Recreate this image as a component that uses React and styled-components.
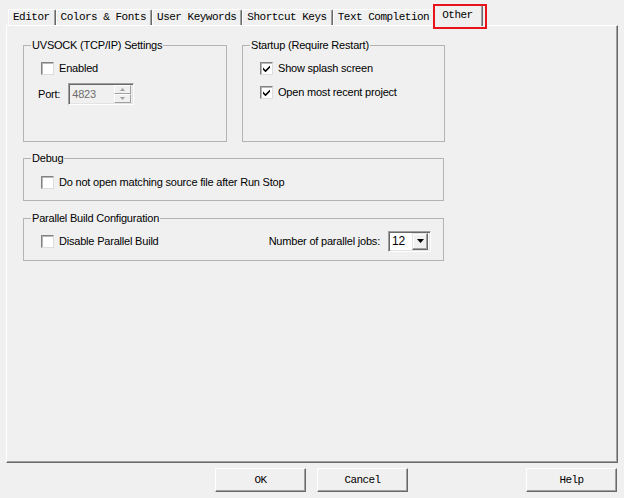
import React from "react";
import styled, { createGlobalStyle } from "styled-components";

const GlobalStyle = createGlobalStyle`
  html, body {
    margin: 0;
    padding: 0;
    background: #f0f0f0;
    width: 624px;
    height: 498px;
    overflow: hidden;
  }
  * {
    box-sizing: border-box;
  }
`;

const tabs = [
  "Editor",
  "Colors & Fonts",
  "User Keywords",
  "Shortcut Keys",
  "Text Completion",
  "Other",
];

const CheckMark = () => (
  <svg width="9" height="9" viewBox="0 0 9 9">
    <path d="M1 3.5 L3.5 6 L8 1.5 L8 3.8 L3.5 8.2 L1 5.7 Z" fill="#000" />
  </svg>
);

const Check = ({ checked, label }) => (
  <CheckRow>
    <Box>{checked && <CheckMark />}</Box>
    <Label>{label}</Label>
  </CheckRow>
);

const App = () => {
  return (
    <Window>
      <GlobalStyle />
      <TabStrip>
        {tabs.map((t) => (
          <Tab key={t} $active={t === "Other"}>
            {t}
            {t === "Other" && <Highlight />}
          </Tab>
        ))}
      </TabStrip>
      <Panel>
        <TopRow>
          <Group $height={104}>
            <Legend>UVSOCK (TCP/IP) Settings</Legend>
            <GroupBody $top={6} $gap={5}>
              <Check label="Enabled" />
              <PortRow>
                <Label>Port:</Label>
                <SpinBox>
                  <SpinText>4823</SpinText>
                  <SpinButtons>
                    <SpinBtn>
                      <svg width="5" height="3" viewBox="0 0 5 3">
                        <path d="M2.5 0 L5 3 L0 3 Z" fill="#a0a0a0" />
                      </svg>
                    </SpinBtn>
                    <SpinBtn>
                      <svg width="5" height="3" viewBox="0 0 5 3">
                        <path d="M0 0 L5 0 L2.5 3 Z" fill="#a0a0a0" />
                      </svg>
                    </SpinBtn>
                  </SpinButtons>
                </SpinBox>
              </PortRow>
            </GroupBody>
          </Group>
          <Group $height={104}>
            <Legend>Startup (Require Restart)</Legend>
            <GroupBody $top={6} $gap={4}>
              <Check checked label="Show splash screen" />
              <Check checked label="Open most recent project" />
            </GroupBody>
          </Group>
        </TopRow>
        <Group $height={50} $width={421} $mt={9}>
          <Legend>Debug</Legend>
          <GroupBody $top={7}>
            <Check label="Do not open matching source file after Run Stop" />
          </GroupBody>
        </Group>
        <Group $height={50} $width={421} $mt={10}>
          <Legend>Parallel Build Configuration</Legend>
          <GroupBody $top={5}>
            <SplitRow>
              <Check label="Disable Parallel Build" />
              <JobsRow>
                <Label>Number of parallel jobs:</Label>
                <Combo>
                  <ComboText>12</ComboText>
                  <ComboBtn>
                    <svg width="7" height="4" viewBox="0 0 7 4">
                      <path d="M0 0 L7 0 L3.5 4 Z" fill="#000" />
                    </svg>
                  </ComboBtn>
                </Combo>
              </JobsRow>
            </SplitRow>
          </GroupBody>
        </Group>
      </Panel>
      <Footer>
        <Button>OK</Button>
        <Button>Cancel</Button>
        <Button $push>Help</Button>
      </Footer>
    </Window>
  );
};

export default App;

const Window = styled.div`
  width: 624px;
  height: 498px;
  display: flex;
  flex-direction: column;
  font-family: "Liberation Sans", Arial, sans-serif;
  font-size: 11px;
  letter-spacing: -0.2px;
  color: #000;
`;

const TabStrip = styled.div`
  display: flex;
  align-items: flex-end;
  height: 25px;
  padding-left: 8px;
`;

const Tab = styled.div`
  position: relative;
  height: ${(p) => (p.$active ? "21px" : "16px")};
  margin: ${(p) => (p.$active ? "0 0 -1px -1px" : "0")};
  padding: ${(p) => (p.$active ? "3px 9px 0 7px" : "1px 5px 0 4px")};
  z-index: ${(p) => (p.$active ? 2 : 0)};
  background: #f0f0f0;
  border-top: 1px solid #fff;
  border-left: 1px solid #fff;
  border-right: 1px solid #696969;
  box-shadow: inset -1px 0 0 #a0a0a0;
  border-radius: 2px 2px 0 0;
  font-family: "Liberation Mono", "Courier New", monospace;
  font-size: 11px;
  letter-spacing: -0.5px;
  line-height: 13px;
  white-space: nowrap;
`;

const Highlight = styled.span`
  position: absolute;
  left: -2px;
  right: -5px;
  top: -2px;
  bottom: -3px;
  border: 2px solid #e8141c;
`;

const Panel = styled.div`
  margin-left: 6px;
  width: 612px;
  height: 438px;
  border-top: 1px solid #fff;
  border-left: 1px solid #fff;
  border-right: 1px solid #696969;
  border-bottom: 1px solid #696969;
  box-shadow: inset -1px -1px 0 #a0a0a0;
  padding: 12px 0 0 16px;
  display: flex;
  flex-direction: column;
  align-items: flex-start;
`;

const TopRow = styled.div`
  display: grid;
  grid-template-columns: 204px 203px;
  column-gap: 15px;
`;

const Group = styled.fieldset`
  margin: ${(p) => p.$mt || 0}px 0 0 0;
  padding: 0;
  height: ${(p) => p.$height}px;
  width: ${(p) => (p.$width ? `${p.$width}px` : "auto")};
  border: 1px solid #b4b4b4;
  min-width: 0;
`;

const Legend = styled.legend`
  margin-left: 7px;
  padding: 0 1px;
  line-height: 14px;
  font-size: 11px;
`;

const GroupBody = styled.div`
  display: flex;
  flex-direction: column;
  gap: ${(p) => p.$gap || 0}px;
  padding: ${(p) => p.$top}px 12px 0 17px;
`;

const CheckRow = styled.div`
  display: flex;
  align-items: center;
  height: 20px;
  gap: 5px;
`;

const Box = styled.span`
  width: 13px;
  height: 13px;
  background: #fff;
  border: 1px solid;
  border-color: #828282 #dcdcdc #dcdcdc #828282;
  box-shadow: inset 1px 1px 0 #b8b8b8;
  display: flex;
  align-items: center;
  justify-content: center;
`;

const Label = styled.span`
  white-space: nowrap;
`;

const PortRow = styled.div`
  display: flex;
  align-items: center;
  gap: 8px;
  margin-left: -3px;
  height: 22px;
`;

const SpinBox = styled.div`
  width: 66px;
  height: 22px;
  display: flex;
  align-items: center;
  justify-content: space-between;
  border: 1px solid;
  border-color: #a0a0a0 #fff #fff #a0a0a0;
  box-shadow: inset 1px 1px 0 #696969, inset -1px -1px 0 #e3e3e3;
  padding: 2px 2px 2px 3px;
`;

const SpinText = styled.span`
  color: #6d6d6d;
`;

const SpinButtons = styled.div`
  display: flex;
  flex-direction: column;
  width: 17px;
  height: 18px;
`;

const SpinBtn = styled.div`
  flex: 1;
  display: flex;
  align-items: center;
  justify-content: center;
  border: 1px solid;
  border-color: #fff #a0a0a0 #a0a0a0 #fff;
`;

const SplitRow = styled.div`
  display: flex;
  align-items: center;
  justify-content: space-between;
  height: 22px;
`;

const JobsRow = styled.div`
  display: flex;
  align-items: center;
  gap: 8px;
`;

const Combo = styled.div`
  width: 43px;
  height: 21px;
  display: flex;
  align-items: center;
  justify-content: space-between;
  background: #fff;
  border: 1px solid;
  border-color: #a0a0a0 #fff #fff #a0a0a0;
  box-shadow: inset 1px 1px 0 #696969, inset -1px -1px 0 #e3e3e3;
  padding: 2px;
`;

const ComboText = styled.span`
  padding-left: 1px;
  font-size: 12px;
`;

const ComboBtn = styled.div`
  width: 16px;
  height: 17px;
  background: #f0f0f0;
  display: flex;
  align-items: center;
  justify-content: center;
  border: 1px solid;
  border-color: #e3e3e3 #696969 #696969 #e3e3e3;
  box-shadow: inset -1px -1px 0 #a0a0a0, inset 1px 1px 0 #fff;
`;

const Footer = styled.div`
  display: flex;
  padding: 5px 7px 0 215px;
  gap: 11px;
`;

const Button = styled.button`
  width: 91px;
  height: 24px;
  margin-left: ${(p) => (p.$push ? "auto" : "0")};
  background: #f0f0f0;
  border: 1px solid;
  border-color: #fff #696969 #696969 #fff;
  box-shadow: inset -1px -1px 0 #a0a0a0;
  font-family: "Liberation Mono", "Courier New", monospace;
  font-size: 11px;
  letter-spacing: -0.6px;
  color: #000;
  padding: 0;
`;
